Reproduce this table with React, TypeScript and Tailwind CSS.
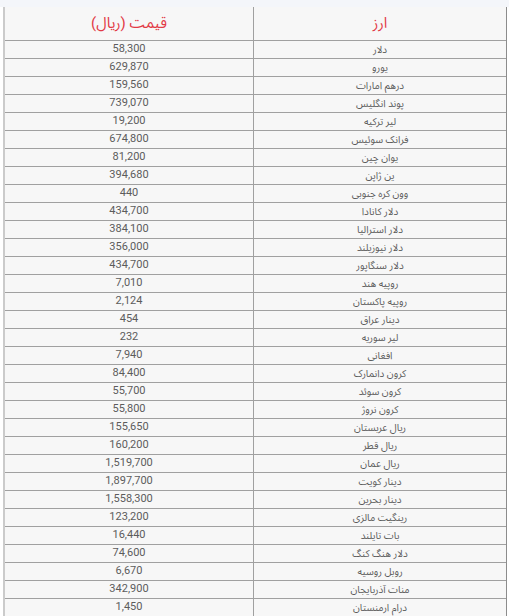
import React from 'react';

type Rate = { name: string; price: string };

const rates: Rate[] = [
  { name: 'دلار', price: '58,300' },
  { name: 'یورو', price: '629,870' },
  { name: 'درهم امارات', price: '159,560' },
  { name: 'پوند انگلیس', price: '739,070' },
  { name: 'لیر ترکیه', price: '19,200' },
  { name: 'فرانک سوئیس', price: '674,800' },
  { name: 'یوان چین', price: '81,200' },
  { name: 'ین ژاپن', price: '394,680' },
  { name: 'وون کره جنوبی', price: '440' },
  { name: 'دلار کانادا', price: '434,700' },
  { name: 'دلار استرالیا', price: '384,100' },
  { name: 'دلار نیوزیلند', price: '356,000' },
  { name: 'دلار سنگاپور', price: '434,700' },
  { name: 'روپیه هند', price: '7,010' },
  { name: 'روپیه پاکستان', price: '2,124' },
  { name: 'دینار عراق', price: '454' },
  { name: 'لیر سوریه', price: '232' },
  { name: 'افغانی', price: '7,940' },
  { name: 'کرون دانمارک', price: '84,400' },
  { name: 'کرون سوئد', price: '55,700' },
  { name: 'کرون نروژ', price: '55,800' },
  { name: 'ریال عربستان', price: '155,650' },
  { name: 'ریال قطر', price: '160,200' },
  { name: 'ریال عمان', price: '1,519,700' },
  { name: 'دینار کویت', price: '1,897,700' },
  { name: 'دینار بحرین', price: '1,558,300' },
  { name: 'رینگیت مالزی', price: '123,200' },
  { name: 'بات تایلند', price: '16,440' },
  { name: 'دلار هنگ کنگ', price: '74,600' },
  { name: 'روبل روسیه', price: '6,670' },
  { name: 'منات آذربایجان', price: '342,900' },
  { name: 'درام ارمنستان', price: '1,450' },
];

const font = "font-['Roboto','Noto_Sans_Arabic','DejaVu_Sans',sans-serif]";

const App: React.FC = () => {
  return (
    <div className={`h-[616px] w-[509px] overflow-hidden bg-white ${font}`}>
      <div className="h-[7px] bg-[#f4f6fa]" />
      <div className="ml-[3px] w-[504px] border-l-2 border-r border-l-[#cbcbcb] border-r-[#8c8c8c] bg-[#f7f7f7]">
        <div className="grid h-[34px] grid-cols-[249px_1fr] border-b border-[#a0a0a0]">
          <div className="flex items-center justify-center border-r border-[#a0a0a0] text-[15px] text-[#e23a46]" dir="rtl">
            قیمت (ریال)
          </div>
          <div className="flex items-center justify-center text-[15px] text-[#e23a46]" dir="rtl">
            ارز
          </div>
        </div>
        {rates.map((rate, idx) => (
          <div key={`${rate.name}-${idx}`} className="grid h-[18px] grid-cols-[249px_1fr] border-b border-[#a0a0a0]">
            <div className="flex items-center justify-center border-r border-[#a0a0a0] text-[11px] text-[#5c5c5c]">
              {rate.price}
            </div>
            <div className="flex items-center justify-center text-[10px] text-[#5c5c5c]" dir="rtl">
              {rate.name}
            </div>
          </div>
        ))}
      </div>
    </div>
  );
};

export default App;
